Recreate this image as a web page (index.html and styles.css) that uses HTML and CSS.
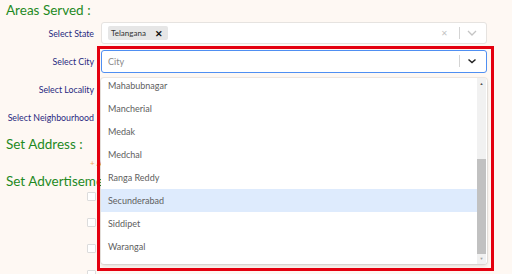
FILE: index.html
```html
<!DOCTYPE html>
<html lang="en">
  <head>
    <meta charset="UTF-8" />
    <meta name="viewport" content="width=device-width, initial-scale=1.0" />
    <title>Areas Served</title>
    <link rel="stylesheet" href="styles.css">
  </head>
  <body>
    <div class="page">
      <h2 class="section-title">Areas Served :</h2>

      <div class="form-rows">
        <div class="form-row">
          <label class="form-label">Select State</label>
          <div class="select-control">
            <div class="select-values">
              <span class="tag">Telangana <span class="tag-remove">&#x2715;</span></span>
            </div>
            <div class="select-indicators">
              <span class="clear-icon">&#x2715;</span>
              <span class="indicator-sep"></span>
              <svg class="chevron light" width="10" height="6" viewBox="0 0 10 6"><path d="M1 1l4 4 4-4" fill="none" stroke="currentColor" stroke-width="1.3"/></svg>
            </div>
          </div>
        </div>

        <div class="form-row">
          <label class="form-label">Select City</label>
          <div class="select-control focused">
            <div class="select-values">
              <span class="placeholder">City</span>
            </div>
            <div class="select-indicators">
              <span class="indicator-sep"></span>
              <svg class="chevron" width="10" height="6" viewBox="0 0 10 6"><path d="M1.5 1.5l3.5 3 3.5-3" fill="none" stroke="currentColor" stroke-width="1.5"/></svg>
            </div>

            <div class="select-menu">
              <div class="menu-list">
                <div class="menu-items">
                  <div class="menu-item">Mahabubnagar</div>
                  <div class="menu-item">Mancherial</div>
                  <div class="menu-item">Medak</div>
                  <div class="menu-item">Medchal</div>
                  <div class="menu-item">Ranga Reddy</div>
                  <div class="menu-item active">Secunderabad</div>
                  <div class="menu-item">Siddipet</div>
                  <div class="menu-item">Warangal</div>
                </div>
              </div>
              <div class="scrollbar">
                <div class="scroll-arrow up">&#x25B2;</div>
                <div class="scroll-track"><div class="scroll-thumb"></div></div>
                <div class="scroll-arrow down">&#x25BC;</div>
              </div>
            </div>
          </div>
        </div>

        <div class="form-row">
          <label class="form-label">Select Locality</label>
          <div class="select-control"></div>
        </div>

        <div class="form-row">
          <label class="form-label">Select Neighbourhood</label>
          <div class="select-control"></div>
        </div>
      </div>

      <h2 class="section-title">Set Address :</h2>
      <div class="add-link">+ Add Address</div>

      <h2 class="section-title">Set Advertisement :</h2>
      <div class="check-list">
        <div class="check-row"><span class="checkbox"></span></div>
        <div class="check-row"><span class="checkbox"></span></div>
        <div class="check-row"><span class="checkbox"></span></div>
        <div class="check-row"><span class="checkbox"></span></div>
      </div>

      <div class="highlight-box"></div>
    </div>
  </body>
</html>
```

FILE: styles.css
```css
body {
  font-family: Lato, "Noto Sans", sans-serif;
  margin: 0;
  padding: 0;
  background-color: #fef8f3;
  overflow: hidden;
}
.page {
  position: relative;
  padding: 0 6px;
  height: 274px;
  overflow: hidden;
}
.section-title {
  margin: 0;
  font-size: 13.5px;
  font-weight: normal;
  line-height: 20px;
  color: #1f8a1f;
  white-space: nowrap;
}
.form-rows {
  display: flex;
  flex-direction: column;
  gap: 6px;
  margin: 2px 0 6px;
}
.form-row {
  display: flex;
  align-items: center;
  gap: 7px;
  height: 22px;
}
.form-label {
  width: 88px;
  text-align: right;
  font-size: 8.8px;
  color: #28287f;
  white-space: nowrap;
}
.select-control {
  position: relative;
  width: 384px;
  height: 20px;
  display: flex;
  align-items: center;
  background-color: white;
  border: 1px solid #e6e3e0;
  border-radius: 3px;
}
.select-control.focused {
  height: 21px;
  border-color: #4f8ff2;
}
.select-values {
  flex: 1;
  display: flex;
  align-items: center;
  padding-left: 6px;
}
.tag {
  display: inline-flex;
  align-items: center;
  gap: 9px;
  height: 14px;
  padding: 0 5px 0 3px;
  background-color: #e6e6e6;
  border-radius: 2px;
  font-size: 8px;
  color: #333;
}
.tag-remove {
  font-size: 9px;
  font-weight: bold;
  color: #111;
}
.placeholder {
  font-size: 9px;
  color: #8a8a8a;
}
.select-indicators {
  display: flex;
  align-items: center;
  padding-right: 9px;
}
.clear-icon {
  font-size: 8px;
  color: #c4c4c4;
  margin-right: 11px;
}
.indicator-sep {
  width: 1px;
  height: 12px;
  background-color: #d4d4d4;
  margin-right: 7px;
}
.chevron {
  color: #222;
}
.chevron.light {
  color: #c4c4c4;
}
.select-menu {
  position: absolute;
  left: -1px;
  top: 27px;
  width: 386px;
  height: 186px;
  display: flex;
  background-color: white;
  border-radius: 3px;
  box-shadow: 0 0 0 1px rgba(0, 0, 0, 0.06), 0 2px 4px rgba(0, 0, 0, 0.12);
  z-index: 2;
}
.menu-list {
  flex: 1;
  overflow: hidden;
}
.menu-items {
  margin-top: -4px;
}
.menu-item {
  height: 23px;
  line-height: 23px;
  padding-left: 7px;
  font-size: 9px;
  color: #606060;
}
.menu-item.active {
  background-color: #deebfd;
}
.scrollbar {
  width: 9px;
  display: flex;
  flex-direction: column;
  background-color: #f1f1f1;
  margin-right: 1px;
}
.scroll-arrow {
  font-size: 4px;
  color: #505050;
  text-align: center;
}
.scroll-arrow.up {
  height: 12px;
  line-height: 12px;
}
.scroll-arrow.down {
  height: 10px;
  line-height: 10px;
  color: #a0a0a0;
}
.scroll-track {
  flex: 1;
  padding-top: 69px;
}
.scroll-thumb {
  height: 95px;
  background-color: #c1c1c1;
}
.add-link {
  height: 12px;
  line-height: 12px;
  margin: 3px 0 2px;
  padding-left: 84px;
  font-size: 8px;
  color: #f2a55a;
}
.check-list {
  display: flex;
  flex-direction: column;
  padding: 1px 0 0 81px;
}
.check-row {
  height: 26px;
}
.checkbox {
  display: block;
  width: 7px;
  height: 7px;
  background-color: white;
  border: 1px solid #dcdcdc;
  border-radius: 1px;
}
.highlight-box {
  position: absolute;
  left: 97px;
  top: 46px;
  width: 391px;
  height: 219px;
  border: 3px solid #e4000f;
  z-index: 3;
}
```
